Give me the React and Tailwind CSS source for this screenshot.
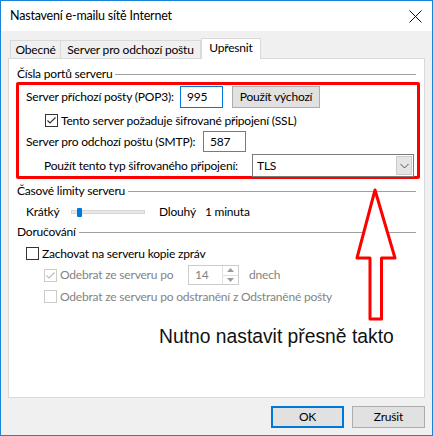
import React from 'react';

const Check = ({ checked, disabled }) => (
  <span className={`relative flex h-[13px] w-[13px] shrink-0 items-center justify-center border bg-white ${disabled ? 'border-[#cccccc]' : 'border-[#333333]'}`}>
    {checked && (
      <svg width="11" height="11" viewBox="0 0 11 11" className="absolute left-[0px] top-[0px]">
        <path d="M1.5 5.5 L4 8 L9.5 2.5" fill="none" stroke={disabled ? '#bdbdbd' : '#333333'} strokeWidth="1.2" />
      </svg>
    )}
  </span>
);

const GroupHeader = ({ title, className = '' }) => (
  <div className={`flex items-center gap-[3px] h-[16px] ${className}`}>
    <span>{title}</span>
    <div className="h-px flex-1 bg-[#a0a0a0]" />
  </div>
);

export default function App() {
  return (
    <div
      className="relative flex h-[436px] w-[433px] flex-col whitespace-nowrap border border-[#1883d7] bg-[#f0f0f0] text-[12px] leading-[16px] tracking-[-0.2px] text-black"
      style={{ fontFamily: 'Lato, sans-serif' }}
    >
      {/* title bar */}
      <div className="flex h-[30px] items-center justify-between bg-white pl-[9px] pr-[10px]">
        <span className="text-[12.5px]">Nastavení e-mailu sítě Internet</span>
        <svg width="13" height="13" viewBox="0 0 13 13">
          <path d="M0.5 0.5 L12.5 12.5 M12.5 0.5 L0.5 12.5" stroke="#111" strokeWidth="1" />
        </svg>
      </div>

      <div className="flex flex-1 flex-col px-[7px]">
        {/* tabs */}
        <div className="mt-[7px] flex h-[20px] items-end pl-[2px]">
          <div className="flex h-[18px] w-[51px] items-center justify-center border border-b-0 border-[#d9d9d9] bg-[#f0f0f0]">Obecné</div>
          <div className="flex h-[18px] w-[140px] items-center justify-center border border-b-0 border-l-0 border-[#d9d9d9] bg-[#f0f0f0]">Server pro odchozí poštu</div>
          <div className="relative z-10 mb-[-1px] flex h-[21px] w-[60px] items-center justify-center border border-b-0 border-[#d9d9d9] bg-white pb-[3px]">Upřesnit</div>
        </div>

        {/* panel */}
        <div className="relative flex flex-1 flex-col border border-[#d9d9d9] bg-white px-[8px]">
          <GroupHeader title="Čísla portů serveru" className="mt-[7px]" />

          <div className="ml-[-1px] mr-[-4px] flex h-[97px] flex-col rounded-[2px] border-[3px] border-[#ff0000] pl-[7px] pr-[3px]">
            <div className="mt-[1px] flex h-[22px] items-center">
              <span className="w-[154px]">Server příchozí pošty (POP3):</span>
              <div className="flex h-[22px] w-[43px] shrink-0 items-center border border-[#0078d7] pl-[6px]">995</div>
              <div className="ml-[9px] flex h-[22px] w-[88px] shrink-0 items-center justify-center border border-[#adadad] bg-[#e1e1e1]">Použít výchozí</div>
            </div>
            <div className="mt-[6px] flex h-[13px] items-center gap-[3px] pl-[19px]">
              <Check checked />
              <span>Tento server požaduje šifrované připojení (SSL)</span>
            </div>
            <div className="mt-[4px] flex h-[21px] items-center">
              <span className="w-[177px]">Server pro odchozí poštu (SMTP):</span>
              <div className="flex h-[21px] w-[43px] shrink-0 items-center border border-[#7a7a7a] pl-[6px]">587</div>
            </div>
            <div className="mt-[2px] flex h-[23px] items-center pl-[18px]">
              <span className="w-[208px]">Použít tento typ šifrovaného připojení:</span>
              <div className="flex h-[23px] flex-1 items-center justify-between border border-[#7a7a7a] pl-[4px] pr-[1px]">
                <span>TLS</span>
                <div className="flex h-[19px] w-[16px] items-center justify-center border border-[#cccccc] bg-[#e5e5e5]">
                  <svg width="9" height="6" viewBox="0 0 9 6">
                    <path d="M0.5 1 L4.5 5 L8.5 1" fill="none" stroke="#555" strokeWidth="1" />
                  </svg>
                </div>
              </div>
            </div>
          </div>

          <GroupHeader title="Časové limity serveru" className="mt-[4px]" />
          <div className="mt-[5px] flex h-[16px] items-center pl-[9px]">
            <span className="w-[45px]">Krátký</span>
            <div className="relative h-[4px] w-[74px] border border-[#d6d6d6] bg-[#e7eaea]">
              <div className="absolute left-[5px] top-[-3px] h-[9px] w-[5px] rounded-[1px] bg-[#0078d7]" />
            </div>
            <span className="ml-[14px]">Dlouhý</span>
            <span className="ml-[9px]">1 minuta</span>
          </div>

          <GroupHeader title="Doručování" className="mt-[4px]" />
          <div className="mt-[7px] flex h-[13px] items-center gap-[3px] pl-[9px]">
            <Check />
            <span>Zachovat na serveru kopie zpráv</span>
          </div>
          <div className="mt-[5px] flex h-[20px] items-center pl-[27px] text-[#838383]">
            <Check checked disabled />
            <span className="ml-[3px] w-[128px]">Odebrat ze serveru po</span>
            <div className="flex h-[20px] w-[51px] shrink-0 items-center justify-between border border-[#cccccc]">
              <span className="pl-[6px]">14</span>
              <div className="flex h-full w-[16px] flex-col border-l border-[#e0e0e0]">
                <div className="flex flex-1 items-center justify-center border-b border-[#e0e0e0]">
                  <svg width="7" height="4" viewBox="0 0 7 4"><path d="M0 4 L3.5 0 L7 4 Z" fill="#9a9a9a" /></svg>
                </div>
                <div className="flex flex-1 items-center justify-center">
                  <svg width="7" height="4" viewBox="0 0 7 4"><path d="M0 0 L3.5 4 L7 0 Z" fill="#9a9a9a" /></svg>
                </div>
              </div>
            </div>
            <span className="ml-[10px]">dnech</span>
          </div>
          <div className="mt-[5px] flex h-[13px] items-center gap-[3px] pl-[27px] text-[#838383]">
            <Check disabled />
            <span>Odebrat ze serveru po odstranění z Odstraněné pošty</span>
          </div>
        </div>

        {/* buttons */}
        <div className="flex justify-end gap-[8px] pb-[7px] pt-[8px]">
          <div className="flex h-[22px] w-[73px] items-center justify-center border-2 border-[#0078d7] bg-[#e1e1e1]">OK</div>
          <div className="flex h-[22px] w-[73px] items-center justify-center border border-[#adadad] bg-[#e1e1e1]">Zrušit</div>
        </div>
      </div>

      {/* annotation */}
      <svg className="absolute left-[350px] top-[183px]" width="50" height="140" viewBox="350 183 50 140">
        <path
          d="M374 189 L394 257 L380.5 257 L380.5 318 L369 318 L369 257 L356 257 Z"
          fill="white"
          stroke="#ff0000"
          strokeWidth="3"
          strokeLinejoin="round"
        />
      </svg>
      <span
        className="absolute left-[158px] top-[325px] text-[19.3px] leading-[22px] tracking-normal text-[#111]"
        style={{ fontFamily: '"Liberation Sans", sans-serif' }}
      >
        Nutno nastavit přesně takto
      </span>
    </div>
  );
}
